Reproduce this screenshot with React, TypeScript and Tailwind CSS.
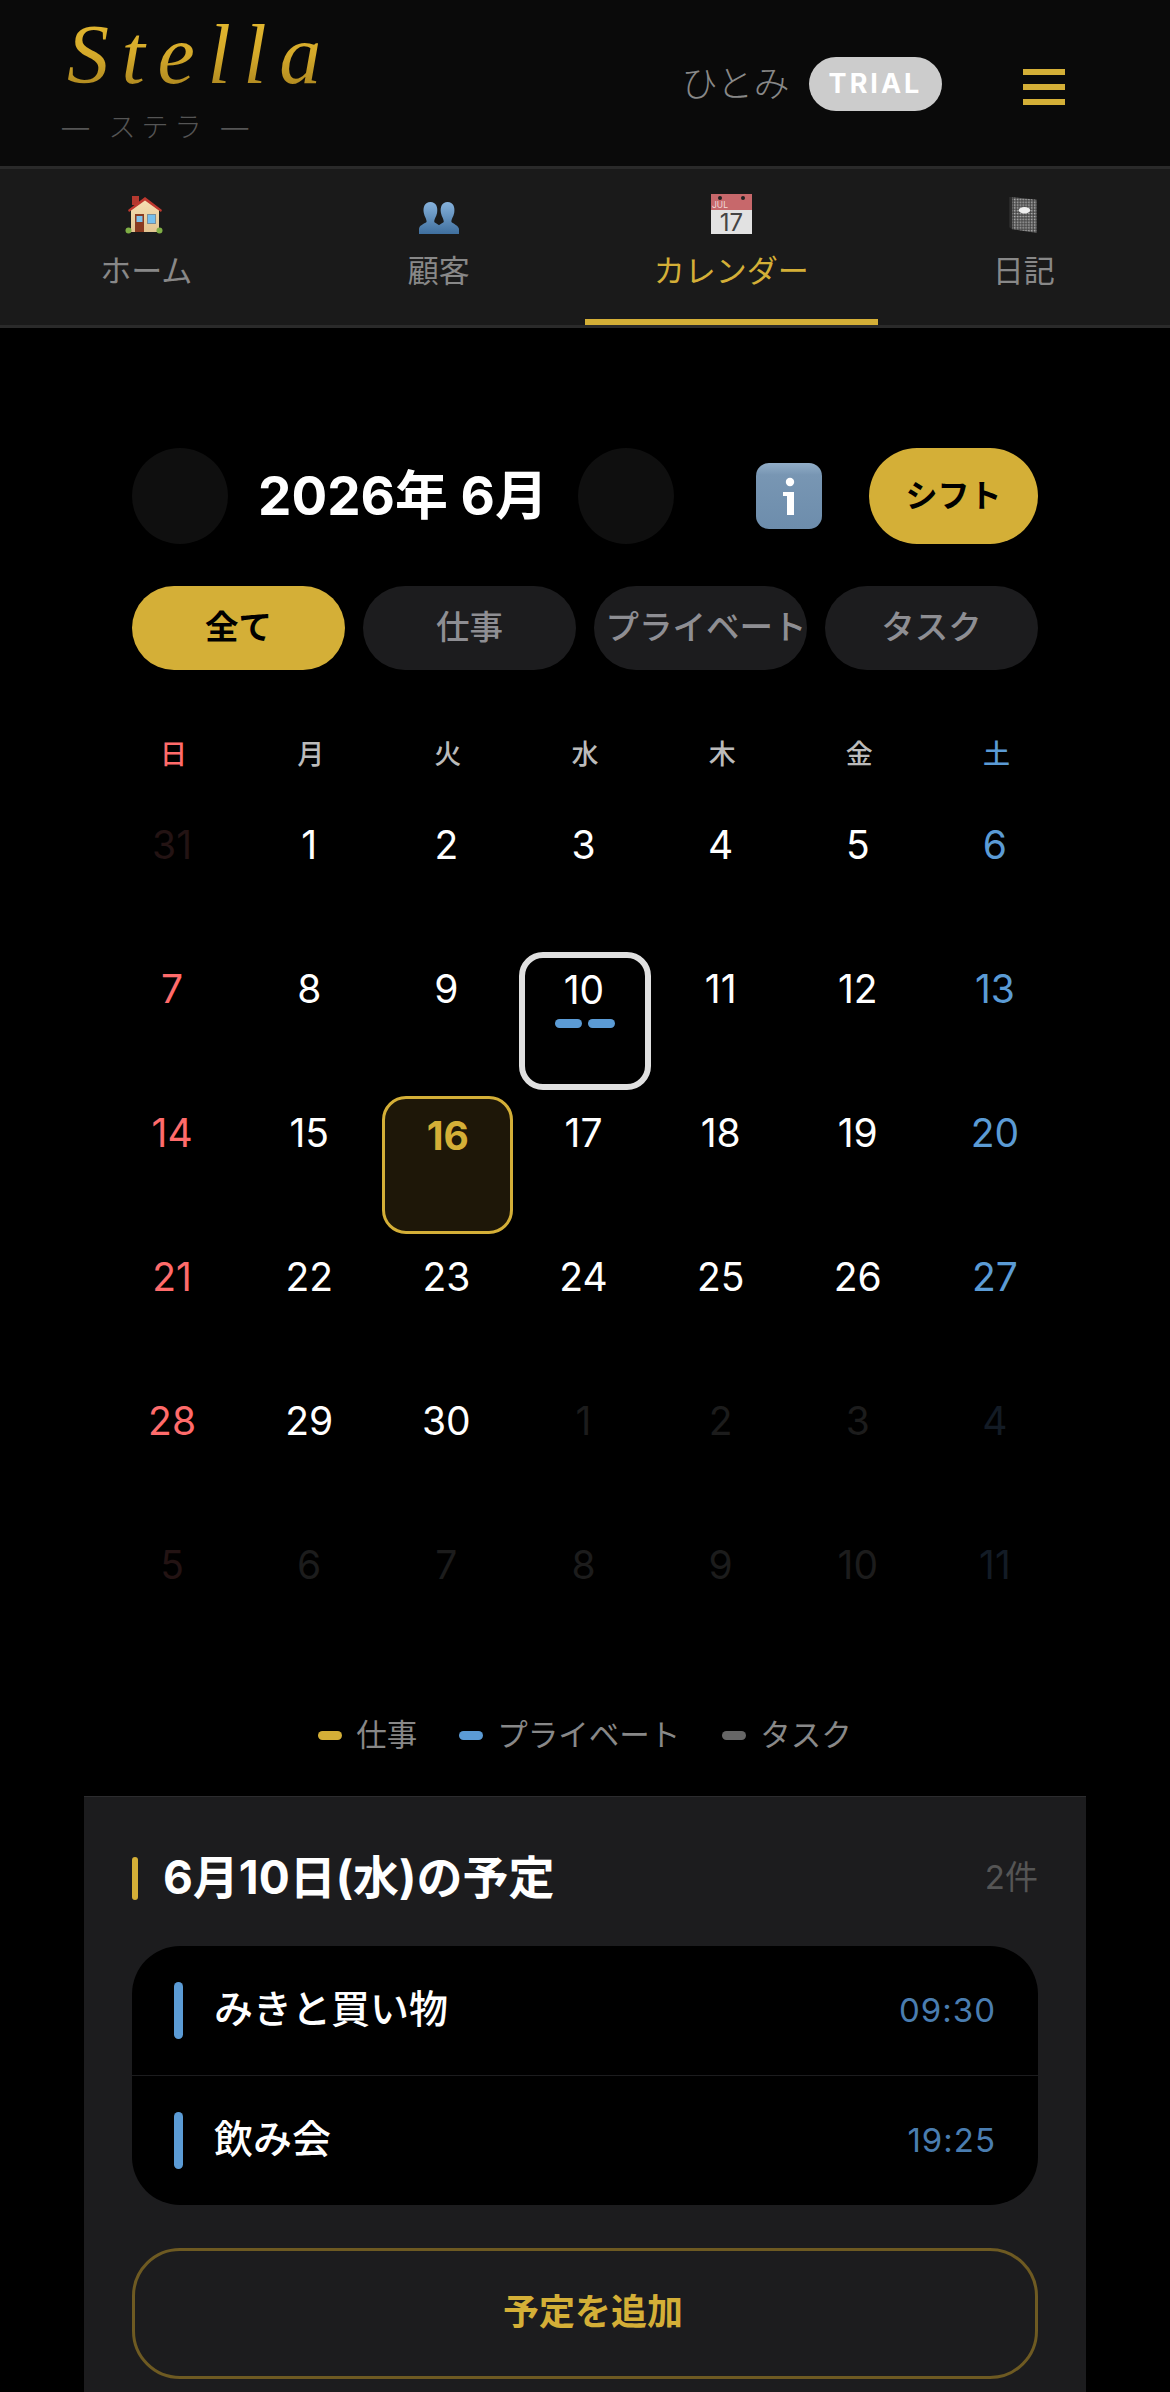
import React from "react";

const font = { fontFamily: "Inter, 'Noto Sans CJK JP', sans-serif" };

function HouseIcon() {
  return (
    <svg viewBox="0 0 38 38" className="w-[38px] h-[38px] mr-[4px]">
      <defs>
        <linearGradient id="wall" x1="0" y1="0" x2="0" y2="1">
          <stop offset="0" stopColor="#f7dfb4" />
          <stop offset="1" stopColor="#e3c592" />
        </linearGradient>
      </defs>
      <rect x="7" y="0" width="7" height="9" fill="#b5392f" />
      <path d="M6 14 L20 3 L34 14 V36 H6 Z" fill="url(#wall)" />
      <path d="M3 14 L20 1 L37 14 L36 16 L20 4.5 L4 16 Z" fill="#c0392f" />
      <rect x="10" y="18" width="9" height="18" fill="#8a3a20" />
      <rect x="11.5" y="20" width="6" height="6" fill="#7fc0ea" />
      <rect x="22" y="18" width="9" height="10" fill="#7b8f9a" />
      <rect x="23" y="19" width="7" height="8" fill="#76bfee" />
      <circle cx="3.5" cy="34.5" r="3" fill="#7fae45" />
      <circle cx="34.5" cy="34.5" r="3" fill="#7fae45" />
    </svg>
  );
}

function BustsIcon() {
  return (
    <svg viewBox="0 0 42 36" preserveAspectRatio="none" className="w-[40px] h-[32px]">
      <defs>
        <linearGradient id="bust" x1="0" y1="0" x2="0" y2="1">
          <stop offset="0" stopColor="#86b2dc" />
          <stop offset="1" stopColor="#3f6f9e" />
        </linearGradient>
      </defs>
      <path d="M12 0 C18 0 20 6 19 12 C18 17 16 19 16 22 C16 24 22 25 23 29 L23 36 H0 V30 C1 25 8 24 8 22 C8 19 6 17 5 12 C4 6 6 0 12 0 Z" fill="url(#bust)" />
      <path d="M30 0 C36 0 38 6 37 12 C36 17 34 19 34 22 C34 24 40 25 42 30 V36 H19 V29 C20 25 26 24 26 22 C26 19 24 17 23 12 C22 6 24 0 30 0 Z" fill="url(#bust)" />
    </svg>
  );
}

function CalendarIcon() {
  return (
    <svg viewBox="0 0 41 40" className="w-[41px] h-[40px] overflow-visible">
      <rect x="0" y="0" width="41" height="16" fill="#c7686b" />
      <rect x="0" y="16" width="41" height="24" fill="#e2e2e2" />
      <circle cx="9" cy="4" r="2" fill="#222" />
      <circle cx="32" cy="4" r="2" fill="#222" />
      <text x="1" y="14" fontSize="8.5" fill="#f0dada" fontFamily="Inter, sans-serif">JUL</text>
      <text x="20.5" y="37" fontSize="24" fill="#444" textAnchor="middle" fontFamily="Inter, sans-serif">17</text>
    </svg>
  );
}

function NotebookIcon() {
  return (
    <svg viewBox="0 0 32 40" className="w-[31px] h-[38px]">
      <defs>
        <pattern id="speck" width="3" height="3" patternUnits="userSpaceOnUse">
          <rect width="3" height="3" fill="#5c5c5c" />
          <rect x="0" y="0" width="1.4" height="1.2" fill="#b8b8b8" />
          <rect x="2" y="1.5" width="1" height="1" fill="#2a2a2a" />
        </pattern>
      </defs>
      <path d="M4 1 L30 4 V39 L4 35 Z" fill="url(#speck)" />
      <path d="M1 1 H4 V35 L1 33 Z" fill="#2e2e2e" />
      <ellipse cx="17" cy="15" rx="6" ry="3.5" fill="#eee" />
    </svg>
  );
}

function InfoIcon() {
  return (
    <svg viewBox="0 0 66 66" className="w-[66px] h-[66px]">
      <defs>
        <linearGradient id="info" x1="0" y1="0" x2="0" y2="1">
          <stop offset="0" stopColor="#92aec8" />
          <stop offset="0.18" stopColor="#7896b3" />
          <stop offset="1" stopColor="#6d8dac" />
        </linearGradient>
      </defs>
      <rect x="0" y="0" width="66" height="66" rx="13" fill="url(#info)" />
      <circle cx="34" cy="19" r="4.2" fill="#fff" />
      <path d="M27 29 H38 V52 H31 V33 H27 Z" fill="#fff" />
    </svg>
  );
}

const tabs = [
  { label: "ホーム", icon: <HouseIcon /> },
  { label: "顧客", icon: <BustsIcon /> },
  { label: "カレンダー", icon: <CalendarIcon />, active: true },
  { label: "日記", icon: <NotebookIcon /> },
];

const weekdays = ["日", "月", "火", "水", "木", "金", "土"];

const days = [
  31, 1, 2, 3, 4, 5, 6,
  7, 8, 9, 10, 11, 12, 13,
  14, 15, 16, 17, 18, 19, 20,
  21, 22, 23, 24, 25, 26, 27,
  28, 29, 30, 1, 2, 3, 4,
  5, 6, 7, 8, 9, 10, 11,
];

function dayColor(i: number) {
  const col = i % 7;
  const dim = i === 0 || i >= 31;
  if (dim) {
    if (col === 0) return "text-[#231313]";
    if (col === 6) return "text-[#131b25]";
    return "text-[#1c1c1c]";
  }
  if (col === 0) return "text-[#ff6b6b]";
  if (col === 6) return "text-[#5b9bd5]";
  return "text-white";
}

function Day({ n, i }: { n: number; i: number }) {
  const selected = i === 10 && n === 10;
  const today = i === 16;
  if (selected) {
    return (
      <div className="h-[138px] rounded-[24px] border-[6px] border-[#e0e0e0] flex flex-col items-center pt-[8px]">
        <span className="text-[39px] leading-[47px] text-white pr-[2px]">{n}</span>
        <div className="flex gap-[6px] mt-[6px]">
          <span className="w-[27px] h-[9px] rounded-full bg-[#5b9bd5]" />
          <span className="w-[27px] h-[9px] rounded-full bg-[#5b9bd5]" />
        </div>
      </div>
    );
  }
  if (today) {
    return (
      <div className="h-[138px] rounded-[24px] border-[3px] border-[#d4af37] bg-[#1e1708] flex flex-col items-center pt-[13px]">
        <span className="text-[39px] leading-[47px] font-bold text-[#d4af37]">{n}</span>
      </div>
    );
  }
  return (
    <div className="h-[138px] flex flex-col items-center pt-[13px] pr-[3px]">
      <span className={`text-[39px] leading-[47px] ${dayColor(i)}`}>{n}</span>
    </div>
  );
}

export default function App() {
  return (
    <div className="w-[1170px] h-[2392px] overflow-hidden bg-black text-white" style={font}>
      <header className="h-[166px] bg-[#0a0a0a] flex items-start justify-between pl-[62px]">
        <div className="flex flex-col">
          <span
            className="mt-[10px] ml-[5px] text-[84px] leading-[90px] italic tracking-[12.6px] bg-gradient-to-b from-[#e6bb30] via-[#d4a92a] to-[#a07c1c] bg-clip-text text-transparent"
            style={{ fontFamily: "'Liberation Serif', serif" }}
          >
            Stella
          </span>
          <span className="mt-[10px] text-[27px] leading-[36px] tracking-[6px] font-light text-[#555]">— ステラ —</span>
        </div>
        <div className="flex items-center mt-[57px]">
          <span className="text-[36px] leading-[54px] text-[#888] font-light tracking-[0.5px]">ひとみ</span>
          <span className="ml-[19px] w-[133px] h-[54px] rounded-full bg-[#cccccc] flex items-center justify-center text-[27px] font-bold text-white tracking-[3px]">
            TRIAL
          </span>
          <div className="ml-[81px] mr-[105px] flex flex-col gap-[9px] mt-[6px]">
            <span className="block w-[42px] h-[6px] bg-[#d4af37]" />
            <span className="block w-[42px] h-[6px] bg-[#d4af37]" />
            <span className="block w-[42px] h-[6px] bg-[#d4af37]" />
          </div>
        </div>
      </header>

      <nav className="h-[162px] bg-[#1a1a1a] border-y-[3px] border-[#2a2a2a] flex">
        {tabs.map((t) => (
          <div key={t.label} className="relative flex-1 flex flex-col items-center pt-[21px]">
            <div className="h-[44px] flex items-end justify-center">{t.icon}</div>
            <span className={`mt-[17px] text-[31px] leading-[40px] ${t.active ? "text-[#d4af37]" : "text-[#888]"}`}>
              {t.label}
            </span>
            {t.active && <span className="absolute left-0 right-0 bottom-0 h-[6px] bg-[#d4af37]" />}
          </div>
        ))}
      </nav>

      <main className="pt-[120px]">
        <div className="px-[132px]">
          <div className="flex items-center h-[96px]">
            <span className="w-[96px] h-[96px] rounded-full bg-[#0f0f0f] shrink-0" />
            <span className="w-[350px] text-center text-[53px] font-bold leading-[64px] whitespace-nowrap">2026年 6月</span>
            <span className="w-[96px] h-[96px] rounded-full bg-[#0f0f0f] shrink-0" />
            <span className="ml-[82px]"><InfoIcon /></span>
            <span className="ml-auto w-[169px] h-[96px] rounded-full bg-[#d4af37] text-black font-semibold text-[32px] flex items-center justify-center">
              シフト
            </span>
          </div>
          <div className="mt-[42px] grid grid-cols-4 gap-[18px]">
            {["全て", "仕事", "プライベート", "タスク"].map((f, i) => (
              <span
                key={f}
                className={`h-[84px] pb-[2px] rounded-full flex items-center justify-center text-[33.5px] whitespace-nowrap ${
                  i === 0 ? "bg-[#d4af37] text-black font-semibold" : "bg-[#1c1c1e] text-[#8e8e93] font-medium"
                } ${i === 2 ? "pl-[11px]" : ""}`}
              >
                {f}
              </span>
            ))}
          </div>
        </div>

        <div className="mx-[108px] mt-[64px]">
          <div className="grid grid-cols-7 gap-x-[6px] h-[42px] items-center">
            {weekdays.map((w, i) => (
              <span
                key={w}
                className={`text-center text-[27px] leading-[42px] font-medium ${
                  i === 0 ? "text-[#ff6b6b]" : i === 6 ? "text-[#5b9bd5]" : "text-[#bbbbbb]"
                }`}
              >
                {w}
              </span>
            ))}
          </div>
          <div className="mt-[32px] grid grid-cols-7 gap-[6px]">
            {days.map((n, i) => (
              <Day key={i} n={n} i={i} />
            ))}
          </div>
        </div>

        <div className="mt-[51px] flex justify-center items-center h-[36px] gap-[42px] text-[30.5px] text-[#888]">
          <div className="flex items-center gap-[14px]">
            <span className="w-[24px] h-[9px] rounded-full bg-[#d4af37]" />
            <span>仕事</span>
          </div>
          <div className="flex items-center gap-[14px]">
            <span className="w-[24px] h-[9px] rounded-full bg-[#5b9bd5]" />
            <span>プライベート</span>
          </div>
          <div className="flex items-center gap-[14px]">
            <span className="w-[24px] h-[9px] rounded-full bg-[#666]" />
            <span>タスク</span>
          </div>
        </div>

        <section className="mt-[43px] mx-[84px] bg-[#1c1c1e] border-t border-[#2c2c2e] px-[48px] pt-[56px] pb-[60px]">
          <div className="flex items-center justify-between h-[50px]">
            <div className="flex items-center">
              <span className="w-[6px] h-[43px] rounded-full bg-[#d4af37]" />
              <span className="ml-[25px] pb-[2px] text-[46px] font-bold leading-[50px] whitespace-nowrap">6月10日(水)の予定</span>
            </div>
            <span className="text-[33px] text-[#555]">2件</span>
          </div>
          <div className="mt-[43px] rounded-[48px] bg-black">
            <div className="h-[130px] flex items-center pl-[42px] pr-[42px] border-b border-[#1c1c1e]">
              <span className="w-[9px] h-[57px] rounded-full bg-[#5b9bd5]" />
              <span className="ml-[31px] text-[39px] leading-[48px] -mt-[4px] font-medium">みきと買い物</span>
              <span className="ml-auto text-[33px] tracking-[1px] text-[#4a7db0]">09:30</span>
            </div>
            <div className="h-[129px] flex items-center pl-[42px] pr-[42px]">
              <span className="w-[9px] h-[57px] rounded-full bg-[#5b9bd5]" />
              <span className="ml-[31px] text-[39px] leading-[48px] -mt-[4px] font-medium">飲み会</span>
              <span className="ml-auto text-[33px] tracking-[1px] text-[#4a7db0]">19:25</span>
            </div>
          </div>
          <div className="mt-[43px] h-[131px] rounded-[48px] border-[3px] border-[#6e5a22] flex items-center justify-center pl-[16px] pb-[4px] text-[36px] font-bold text-[#d4af37]">
            予定を追加
          </div>
        </section>
      </main>
    </div>
  );
}
